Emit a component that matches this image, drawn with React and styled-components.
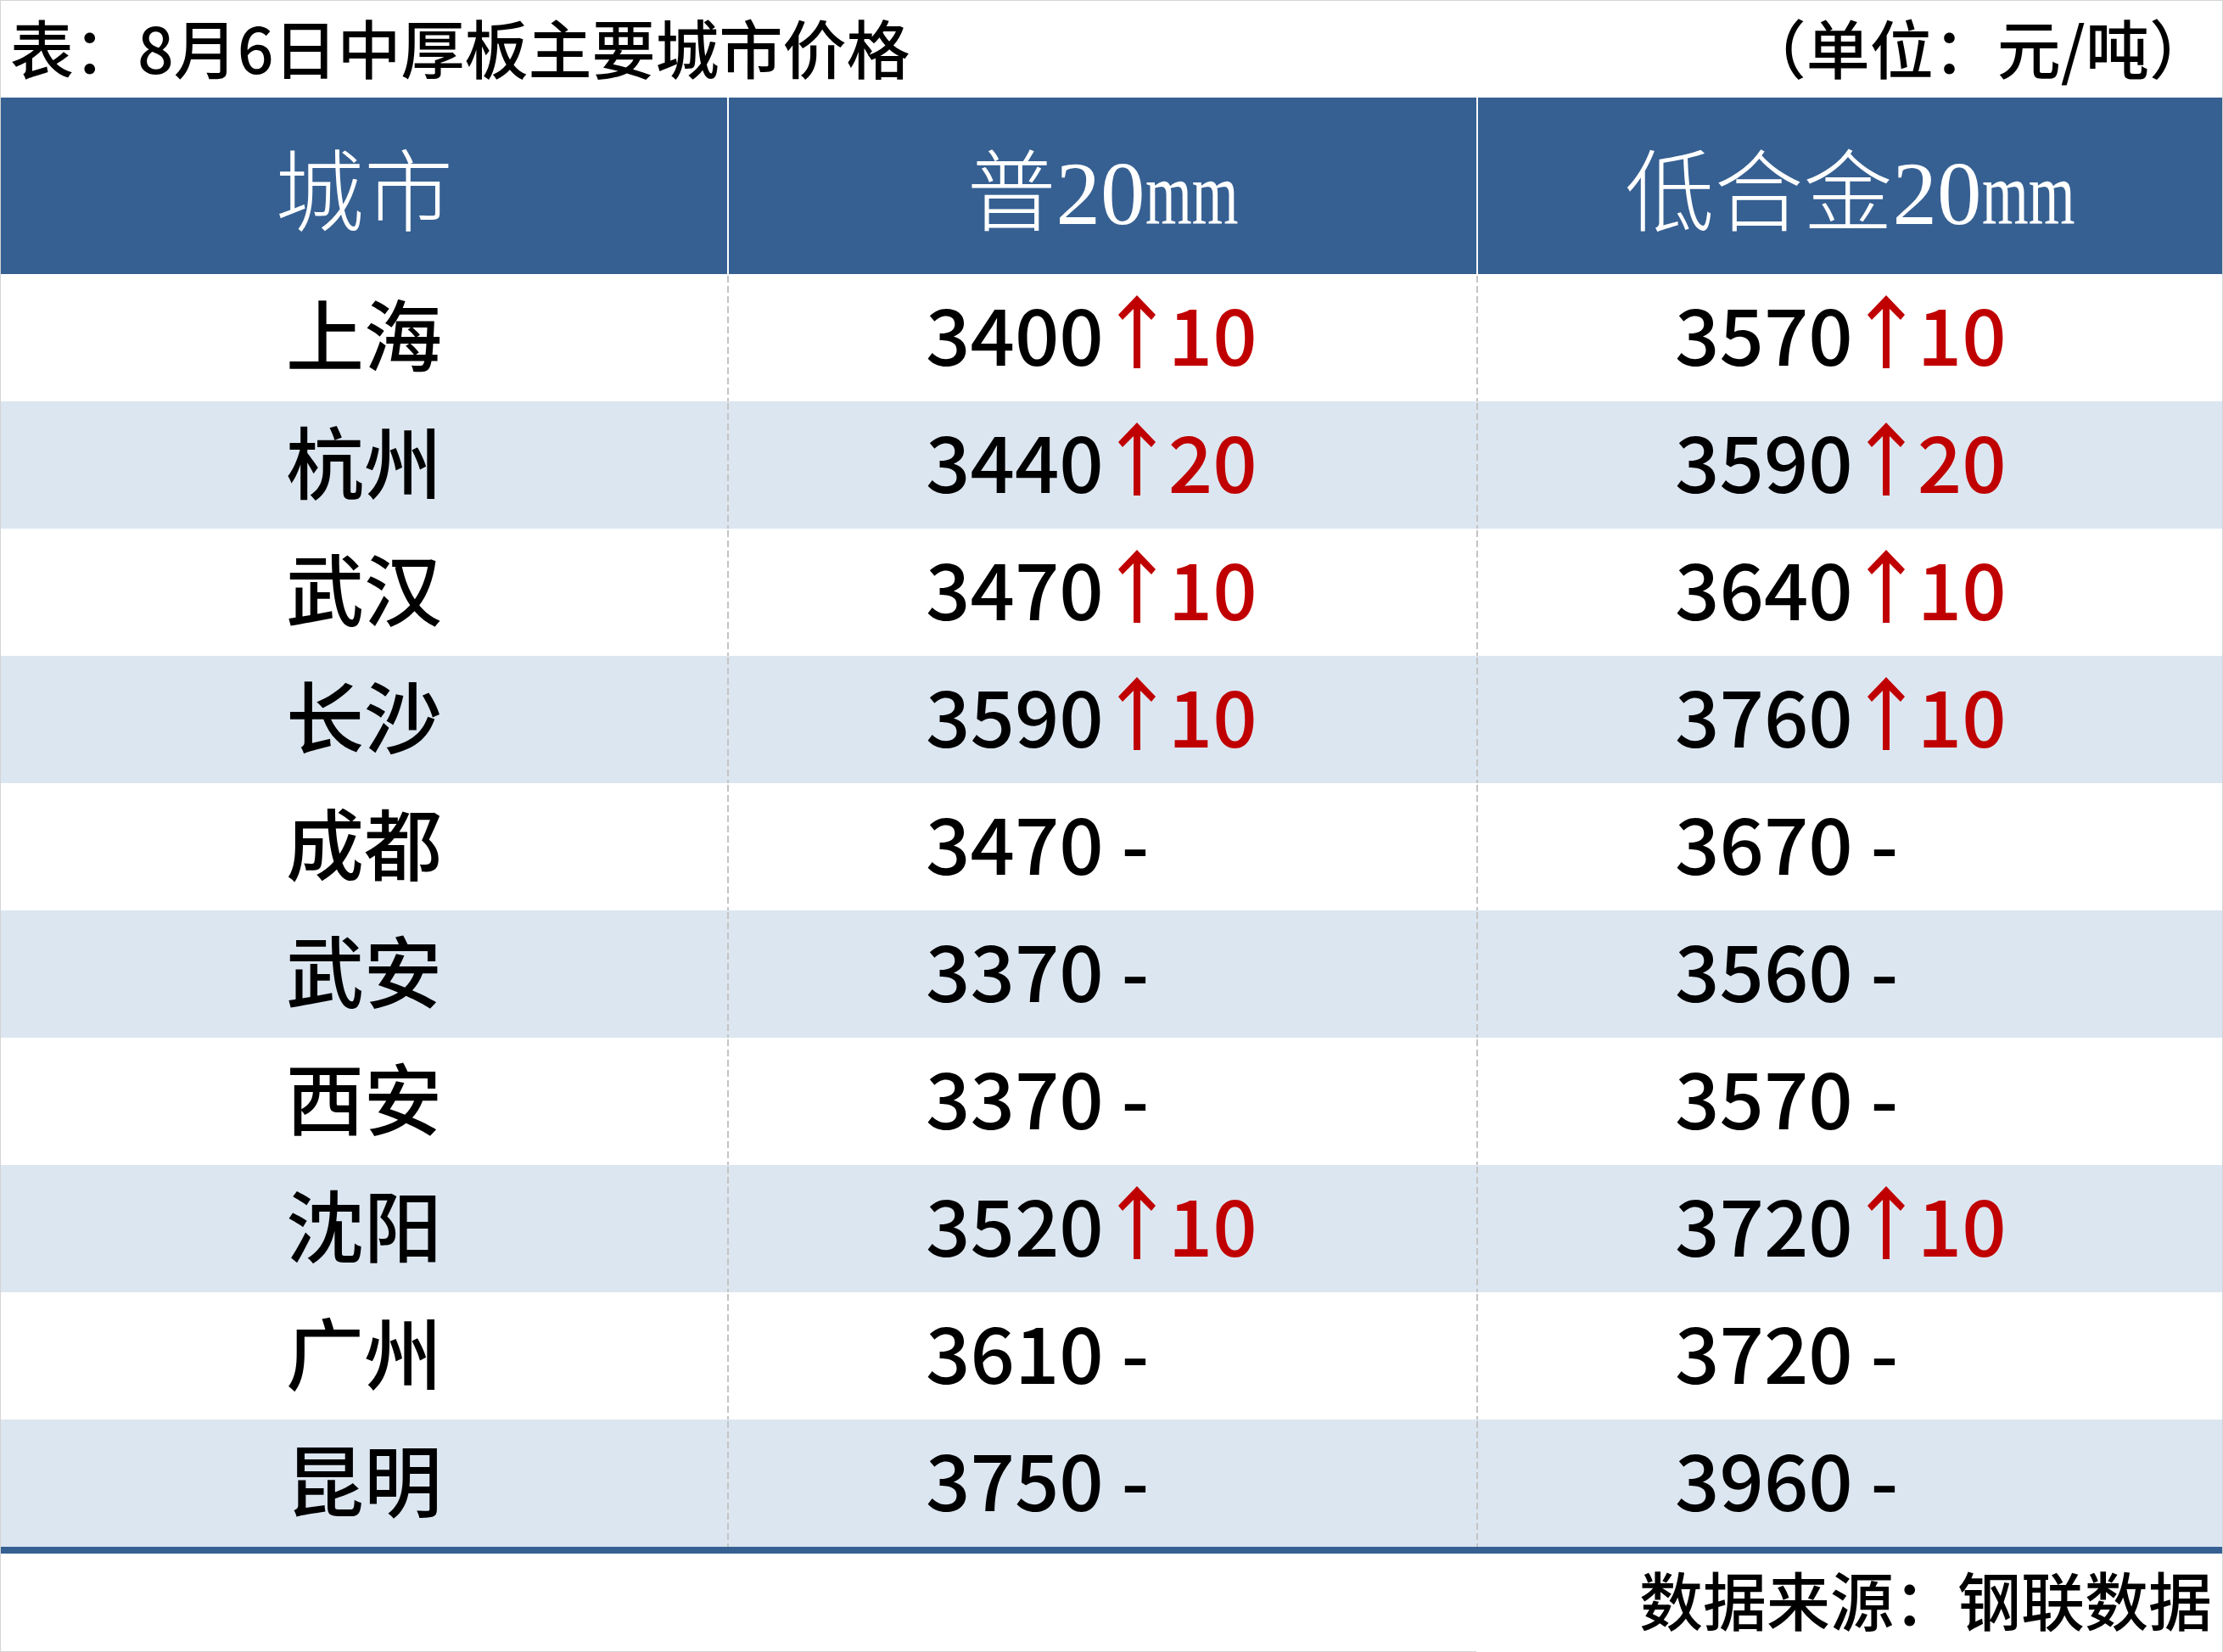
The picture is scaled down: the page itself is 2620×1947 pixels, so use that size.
import React from 'react'
import styled, { createGlobalStyle } from 'styled-components'

const GlobalStyle = createGlobalStyle`
    html, body {
        margin: 0;
        padding: 0;
        background: #fff;
    }
`;

const BLUE = '#366092'
const STRIPE = '#dce6f1'
const RED = '#c00000'
const SANS = `"Noto Sans CJK SC", "Noto Sans", sans-serif`

const Sheet = styled.div`
    width: 2620px;
    height: 1947px;
    box-sizing: border-box;
    border: 1px solid #d4d4d4;
    border-bottom: none;
    display: flex;
    flex-direction: column;
    font-family: ${SANS};
    color: #000;
`;
const TitleBar = styled.div`
    height: 114px;
    box-sizing: border-box;
    flex: none;
    display: flex;
    align-items: center;
    justify-content: space-between;
    padding: 0 11px 8px;
    font-size: 75px;
    font-weight: 500;
    line-height: 1;
`;
const Table = styled.div`
    display: grid;
    grid-template-columns: 856px 883px 1fr;
`;
const HeaderCell = styled.div`
    height: 208px;
    box-sizing: border-box;
    display: flex;
    align-items: center;
    justify-content: center;
    padding-top: 18px;
    background: ${BLUE};
    color: #fff;
    font-family: "Liberation Serif", "Noto Sans CJK SC", serif;
    font-weight: 300;
    font-size: 105px;
    line-height: 1;
    border-left: ${p => (p.$divider ? '2px solid #fff' : 'none')};
`;
const Unit = styled.span`
    display: inline-block;
    transform: scaleX(0.67);
    transform-origin: left center;
    margin-right: -0.51em;
`;
const BodyCell = styled.div`
    height: 150px;
    box-sizing: border-box;
    display: flex;
    align-items: center;
    justify-content: ${p => (p.$center ? 'center' : 'flex-start')};
    padding: 0 0 14px ${p => (p.$center ? '0' : '234px')};
    background-color: ${p => (p.$stripe ? STRIPE : '#fff')};
    background-image: ${p => (p.$divider
        ? 'linear-gradient(to bottom, #c4c4c4 0 8px, transparent 8px 12px)'
        : 'none')};
    background-size: 2px 12px;
    background-repeat: repeat-y;
    background-position: 0 2px;
    font-size: 92px;
    font-weight: 500;
    line-height: 1;
    white-space: pre;
`;
const Delta = styled.span`
    color: ${RED};
`;
const ArrowBox = styled.svg`
    width: 44px;
    height: 86px;
    flex: none;
    margin: 0 15px 0 17px;
    display: block;
`;
const BottomRule = styled.div`
    height: 8px;
    flex: none;
    background: ${BLUE};
`;
const Footer = styled.div`
    height: 116px;
    display: flex;
`;
const FooterSpacer = styled.div`
    width: 1739px;
    flex: none;
    box-sizing: border-box;
    border-bottom: 1px solid #d4d4d4;
`;
const Source = styled.div`
    flex: 1;
    height: 115px;
    box-sizing: border-box;
    display: flex;
    align-items: center;
    justify-content: flex-end;
    padding: 0 12px 10px 0;
    font-size: 75px;
    font-weight: 500;
    line-height: 1;
`;

const rows = [
    { city: '上海', a: ['3400', '10'], b: ['3570', '10'] },
    { city: '杭州', a: ['3440', '20'], b: ['3590', '20'] },
    { city: '武汉', a: ['3470', '10'], b: ['3640', '10'] },
    { city: '长沙', a: ['3590', '10'], b: ['3760', '10'] },
    { city: '成都', a: ['3470'], b: ['3670'] },
    { city: '武安', a: ['3370'], b: ['3560'] },
    { city: '西安', a: ['3370'], b: ['3570'] },
    { city: '沈阳', a: ['3520', '10'], b: ['3720', '10'] },
    { city: '广州', a: ['3610'], b: ['3720'] },
    { city: '昆明', a: ['3750'], b: ['3960'] },
]

const UpArrow = () => (
    <ArrowBox viewBox='0 0 44 86'>
        <path d='M22 0 L44 23 L39 29 L22 12 L5 29 L0 23 Z' fill={RED} />
        <rect x='18' y='6' width='8' height='80' fill={RED} />
    </ArrowBox>
)

const Price = ({ value, stripe }) => {
    const [price, change] = value
    return (
        <BodyCell $stripe={stripe} $divider>
            {change
                ? <>
                    <span>{price}</span>
                    <UpArrow />
                    <Delta>{change}</Delta>
                </>
                : <span>{price + ' -'}</span>}
        </BodyCell>
    )
}

export default function App() {
    return (
        <>
            <GlobalStyle />
            <Sheet>
                <TitleBar>
                    <span>表：8月6日中厚板主要城市价格</span>
                    <span>（单位：元/吨）</span>
                </TitleBar>
                <Table>
                    <HeaderCell>城市</HeaderCell>
                    <HeaderCell $divider>普20<Unit>mm</Unit></HeaderCell>
                    <HeaderCell $divider>低合金20<Unit>mm</Unit></HeaderCell>
                    {rows.map((row, i) => (
                        <React.Fragment key={row.city + i}>
                            <BodyCell $center $stripe={i % 2 === 1}>{row.city}</BodyCell>
                            <Price value={row.a} stripe={i % 2 === 1} />
                            <Price value={row.b} stripe={i % 2 === 1} />
                        </React.Fragment>
                    ))}
                </Table>
                <BottomRule />
                <Footer>
                    <FooterSpacer />
                    <Source>数据来源：钢联数据</Source>
                </Footer>
            </Sheet>
        </>
    )
}
